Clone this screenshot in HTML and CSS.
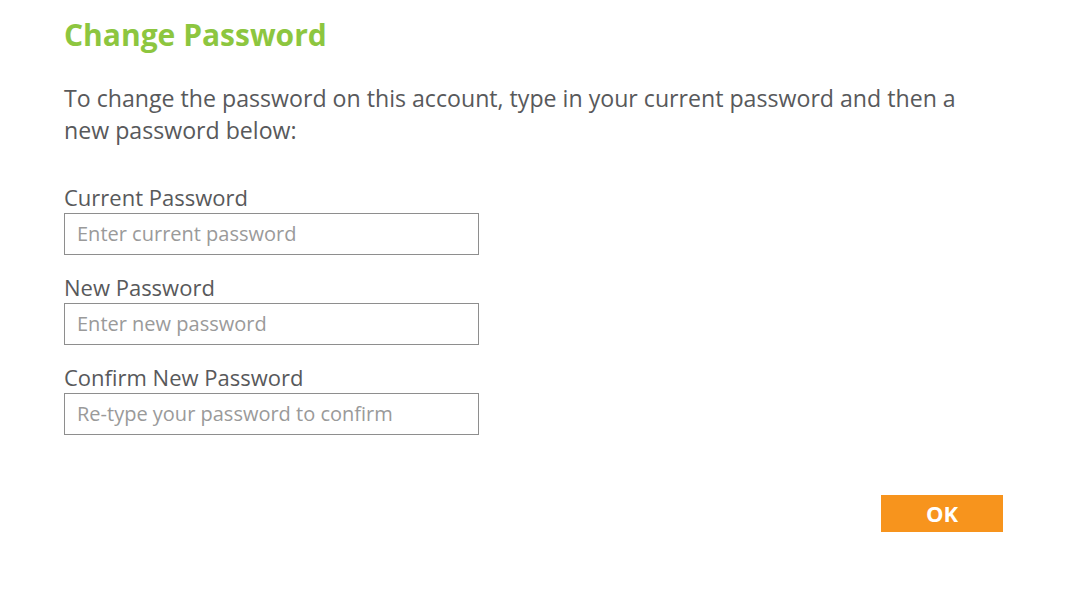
FILE: index.html
```html
<!DOCTYPE html>
<html>
<head>
<meta charset="utf-8">
<link rel="stylesheet" href="styles.css">
</head>
<body>
<div class="page">
  <h1 class="title">Change Password</h1>
  <p class="intro">To change the password on this account, type in your current password and then a new password below:</p>
  <form class="form">
    <div class="field">
      <label class="label">Current Password</label>
      <input class="input" type="password" placeholder="Enter current password">
    </div>
    <div class="field">
      <label class="label">New Password</label>
      <input class="input" type="password" placeholder="Enter new password">
    </div>
    <div class="field">
      <label class="label">Confirm New Password</label>
      <input class="input" type="password" placeholder="Re-type your password to confirm">
    </div>
    <div class="actions">
      <button type="button" class="ok">OK</button>
    </div>
  </form>
</div>
</body>
</html>
```

FILE: styles.css
```css
html, body {
  margin: 0;
  padding: 0;
  background: #ffffff;
}
body {
  font-family: "Open Sans", "Noto Sans", sans-serif;
  color: #58595b;
}
.page {
  padding: 14px 82px 0 64px;
}
.title {
  margin: 0;
  font-size: 30px;
  line-height: 42px;
  font-weight: 700;
  color: #8dc63f;
}
.intro {
  margin: 26px 0 0 0;
  font-size: 23.15px;
  line-height: 32px;
  max-width: 910px;
}
.form {
  margin-top: 39px;
  display: flex;
  flex-direction: column;
}
.field {
  display: flex;
  flex-direction: column;
  margin-bottom: 20px;
}
.label {
  font-size: 22px;
  line-height: 25px;
  padding-bottom: 3px;
}
.input {
  box-sizing: border-box;
  width: 415px;
  height: 42px;
  border: 1px solid #8e8e8e;
  border-radius: 0;
  padding: 0 12px 2px 12px;
  font-family: "Open Sans", "Noto Sans", sans-serif;
  font-size: 20px;
  color: #58595b;
  outline: none;
}
.input::placeholder {
  color: #9a9a9a;
}
.actions {
  display: flex;
  justify-content: flex-end;
  margin-top: 40px;
}
.ok {
  width: 122px;
  height: 37px;
  border: none;
  border-radius: 0;
  background: #f7941d;
  color: #ffffff;
  font-family: "Open Sans", "Noto Sans", sans-serif;
  font-size: 22px;
  font-weight: 700;
  padding: 0 0 2px 0;
}
```
